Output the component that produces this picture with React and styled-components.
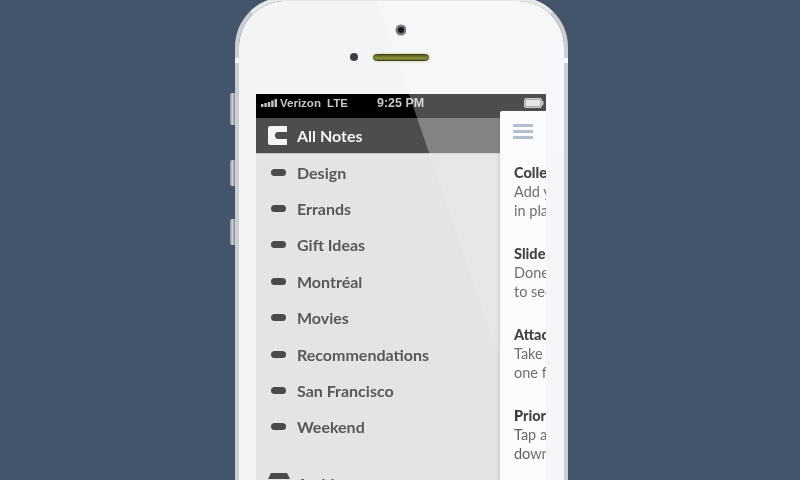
import React from 'react';
import styled, {createGlobalStyle} from 'styled-components';

const GlobalStyle = createGlobalStyle`
    html, body {
        margin: 0;
        height: 100%;
        overflow: hidden;
        background: #44546a;
        font-family: "Lato", "Liberation Sans", sans-serif;
    }
`

const Page = styled.div`
    height: 480px;
    overflow: hidden;
    background: #44546a;
    display: flex;
    justify-content: center;
    padding-left: 3px;
    box-sizing: border-box;
`

const Phone = styled.div`
    position: relative;
    flex: none;
    box-sizing: border-box;
    width: 333px;
    height: 640px;
    margin-top: -3px;
    padding: 93px 18px 0 17px;
    background: #f2f4f6;
    border: 4px solid #ccced2;
    border-top-color: #e6e8ea;
    border-bottom: 0;
    border-radius: 50px 50px 0 0;
    background-clip: padding-box;
    display: flex;
    flex-direction: column;
`

const SideButton = styled.div`
    position: absolute;
    left: -9px;
    top: ${props => props.$top}px;
    width: 5px;
    height: ${props => props.$height}px;
    border-radius: 2px 0 0 2px;
    background: linear-gradient(90deg, #8f96a0, #c9ccd0 50%, #7d8590);
`

const Notch = styled.div`
    position: absolute;
    top: 57px;
    ${props => props.$right ? 'right: -4px;' : 'left: -4px;'}
    width: 4px;
    height: 5px;
    background: #f7f8f9;
`

const Camera = styled.div`
    position: absolute;
    left: 158.5px;
    top: 26px;
    width: 6px;
    height: 6px;
    border-radius: 50%;
    background: #16181b;
    box-shadow: 0 0 0 2.5px #74787d;
    filter: blur(.4px);
`

const Sensor = styled.div`
    position: absolute;
    left: 111px;
    top: 52px;
    width: 8px;
    height: 8px;
    border-radius: 50%;
    background: #3a3d42;
    filter: blur(.3px);
`

const Speaker = styled.div`
    position: absolute;
    left: 133.5px;
    top: 53px;
    width: 54px;
    height: 5px;
    border-radius: 4px;
    background: linear-gradient(#565a1e, #8d9238 60%, #6b6e2a);
    border: 1px solid #3f4020;
    box-shadow: 0 0 0 1.5px #e6e5cf;
    filter: blur(.4px);
`

const Glare = styled.div`
    position: absolute;
    inset: 0;
    overflow: hidden;
    pointer-events: none;
    border-radius: 46px 46px 0 0;

    &::before {
        content: "";
        position: absolute;
        inset: 0;
        background: linear-gradient(rgba(255,255,255,.3) 153px, rgba(255,255,255,.1) 153px);
        clip-path: polygon(138px 0, 100% 0, 100% 100%, 356px 100%);
    }
`

const Screen = styled.div`
    position: relative;
    flex: 1;
    overflow: hidden;
    background: #e4e4e4;
    color: #4c4c4c;
`

const StatusBar = styled.div`
    box-sizing: border-box;
    height: 24px;
    background: #000;
    color: #c6c6c6;
    display: flex;
    align-items: center;
    padding: 0 2px 7px 5px;
    font-family: "Liberation Sans", sans-serif;
    font-weight: 700;
    font-size: 11.5px;
    filter: blur(.35px);
`

const Carrier = styled.span`
    margin-left: 2px;
    width: 47px;
`

const Network = styled.span`
    width: 50px;
`

const Clock = styled.span`
    flex: 1;
    font-size: 12.5px;
`

const Header = styled.div`
    height: 35px;
    background: #4d4d4d;
    border-bottom: 1px solid #c4c4c4;
    display: flex;
    align-items: center;
    padding-left: 12px;
    gap: 10px;
    color: #f4f4f4;
    font-size: 16px;
    font-weight: 700;
    filter: blur(.3px);
`

const List = styled.div`
    display: flex;
    flex-direction: column;
`

const Row = styled.div`
    height: 36.4px;
    display: flex;
    align-items: center;
    padding-left: 15px;
    font-size: 16px;
    font-weight: 700;
    color: #585858;
    filter: blur(.35px);
`

const Pill = styled.span`
    width: 15px;
    height: 7px;
    margin-right: 11px;
    border-radius: 4px;
    background: #4a4a4a;
`

const ArchiveRow = styled(Row)`
    margin-top: 20px;
    padding-left: 12px;
    svg {
        margin-right: 7px;
    }
`

const Drawer = styled.div`
    position: absolute;
    left: 244px;
    top: 17px;
    width: 46px;
    height: 400px;
    box-sizing: border-box;
    background: #fafbfc;
    border-radius: 2px 0 0 0;
    box-shadow: -2px 0 3px rgba(0,0,0,.1);
    overflow: hidden;
    padding: 13px 0 0 13px;
    white-space: nowrap;
`

const Burger = styled.div`
    width: 20px;
    display: flex;
    flex-direction: column;
    gap: 3px;
    margin-bottom: 24px;
    span {
        height: 3px;
        background: #8fa5bb;
    }
`

const Tip = styled.div`
    height: 81px;
    padding-left: 1px;
    font-size: 14.5px;
    line-height: 19px;
    color: #5e5e5e;
    filter: blur(.35px);
`

const TipTitle = styled.div`
    font-weight: 900;
    color: #2e2e2e;
`

const tags = ['Design', 'Errands', 'Gift Ideas', 'Montréal', 'Movies', 'Recommendations', 'San Francisco', 'Weekend'];

const tips = [
    {title: 'Collections', lines: ['Add your notes', 'in places']},
    {title: 'Slide to finish', lines: ['Done with it?', 'to see more']},
    {title: 'Attachments', lines: ['Take a photo', 'one for later']},
    {title: 'Priorities', lines: ['Tap and hold', 'down to move']},
];

const Signal = () => (
    <svg width="17" height="8" viewBox="0 0 17 8" fill="#c6c6c6">
        <rect x="0" y="5" width="2.4" height="3"/>
        <rect x="3.4" y="4" width="2.4" height="4"/>
        <rect x="6.8" y="3" width="2.4" height="5"/>
        <rect x="10.2" y="1.5" width="2.4" height="6.5"/>
        <rect x="13.6" y="0" width="2.4" height="8"/>
    </svg>
);

const Battery = () => (
    <svg width="20" height="10" viewBox="0 0 20 10">
        <rect x=".5" y=".5" width="17" height="9" rx="1.5" fill="#8a8a8a" stroke="#b5b5b5"/>
        <rect x="2" y="2" width="14" height="6" fill="#dcdcdc"/>
        <rect x="18" y="3" width="1.5" height="4" fill="#a5a5a5"/>
    </svg>
);

const Logo = () => (
    <svg width="19" height="19" viewBox="0 0 19 19">
        <path d="M2 0H19V6H10C8 6 7 7.5 7 9.500S8 13 10 13H19V19H2C1 19 0 18 0 17V2C0 1 1 0 2 0Z" fill="#f6f6f6"/>
    </svg>
);

const ArchiveIcon = () => (
    <svg width="22" height="20" viewBox="0 0 22 20" fill="#4a4a4a">
        <path d="M3 0H19L22 6H0Z"/>
        <rect x="2" y="7" width="18" height="13" rx="1"/>
    </svg>
);

export default function App() {
    return (
        <>
            <GlobalStyle/>
            <Page>
                <Phone>
                    <SideButton $top={92} $height={32}/>
                    <SideButton $top={159} $height={26}/>
                    <SideButton $top={218} $height={26}/>
                    <Notch/>
                    <Notch $right/>
                    <Screen>
                        <StatusBar>
                            <Signal/>
                            <Carrier>Verizon</Carrier>
                            <Network>LTE</Network>
                            <Clock>9:25 PM</Clock>
                            <Battery/>
                        </StatusBar>
                        <Header>
                            <Logo/>
                            All Notes
                        </Header>
                        <List>
                            {tags.map(tag => (
                                <Row key={tag}><Pill/>{tag}</Row>
                            ))}
                            <ArchiveRow><ArchiveIcon/>Archive</ArchiveRow>
                        </List>
                        <Drawer>
                            <Burger><span/><span/><span/></Burger>
                            {tips.map(({title, lines}) => (
                                <Tip key={title}>
                                    <TipTitle>{title}</TipTitle>
                                    {lines.map(line => <div key={line}>{line}</div>)}
                                </Tip>
                            ))}
                        </Drawer>
                    </Screen>
                    <Glare/>
                    <Camera/>
                    <Sensor/>
                    <Speaker/>
                </Phone>
            </Page>
        </>
    );
}
